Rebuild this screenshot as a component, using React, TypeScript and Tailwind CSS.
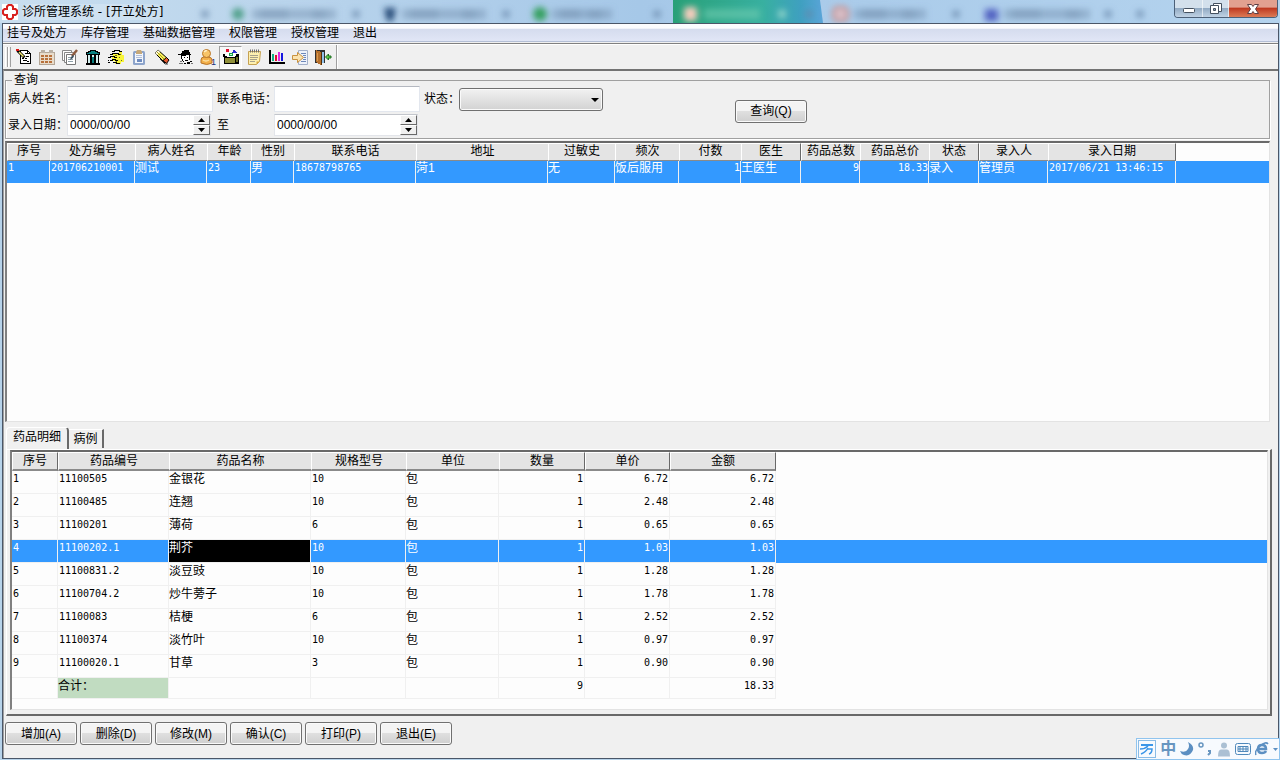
import { clsx } from "clsx";
import type { ReactNode } from "react";

const menus = ["挂号及处方", "库存管理", "基础数据管理", "权限管理", "授权管理", "退出"];

type Column = { title: string; width: number; right?: boolean; mono?: boolean };

const prescriptionColumns: Column[] = [
   { title: "序号", width: 43, mono: true },
   { title: "处方编号", width: 85, mono: true },
   { title: "病人姓名", width: 72 },
   { title: "年龄", width: 44, mono: true },
   { title: "性别", width: 43 },
   { title: "联系电话", width: 122, mono: true },
   { title: "地址", width: 132 },
   { title: "过敏史", width: 67 },
   { title: "频次", width: 64 },
   { title: "付数", width: 62, mono: true, right: true },
   { title: "医生", width: 60 },
   { title: "药品总数", width: 59, mono: true, right: true },
   { title: "药品总价", width: 69, mono: true, right: true },
   { title: "状态", width: 50 },
   { title: "录入人", width: 69 },
   { title: "录入日期", width: 128, mono: true },
];

const prescriptions = [
   ["1", "201706210001", "测试", "23", "男", "18678798765", "菏1", "无", "饭后服用", "1", "王医生", "9", "18.33", "录入", "管理员", "2017/06/21 13:46:15"],
];

const drugColumns: Column[] = [
   { title: "序号", width: 46, mono: true },
   { title: "药品编号", width: 111, mono: true },
   { title: "药品名称", width: 142 },
   { title: "规格型号", width: 95, mono: true },
   { title: "单位", width: 93 },
   { title: "数量", width: 86, mono: true, right: true },
   { title: "单价", width: 85, mono: true, right: true },
   { title: "金额", width: 106, mono: true, right: true },
];

const drugs = [
   ["1", "11100505", "金银花", "10", "包", "1", "6.72", "6.72"],
   ["2", "11100485", "连翘", "10", "包", "1", "2.48", "2.48"],
   ["3", "11100201", "薄荷", "6", "包", "1", "0.65", "0.65"],
   ["4", "11100202.1", "荆芥", "10", "包", "1", "1.03", "1.03"],
   ["5", "11100831.2", "淡豆豉", "10", "包", "1", "1.28", "1.28"],
   ["6", "11100704.2", "炒牛蒡子", "10", "包", "1", "1.78", "1.78"],
   ["7", "11100083", "桔梗", "6", "包", "1", "2.52", "2.52"],
   ["8", "11100374", "淡竹叶", "10", "包", "1", "0.97", "0.97"],
   ["9", "11100020.1", "甘草", "3", "包", "1", "0.90", "0.90"],
];

const actions = ["增加(A)", "删除(D)", "修改(M)", "确认(C)", "打印(P)", "退出(E)"];

const tools: { name: string; art: ReactNode }[] = [
   {
      name: "新建处方",
      art: (
         <>
            <path d="M4.500 1.500h7l3 3v10h-10z" fill="#fff" stroke="#000" />
            <path d="M11.500 1.500v3h3" stroke="#000" />
            <path d="M9 4h2v1H9zM10 7h3v1h-3zM6 9h2v1H6zM9 9h2v1H9zM7 11h4v1H7zM11 12h2v1h-2z" fill="#000" />
            <g shapeRendering="auto">
               <path d="M1.500 1.500l7 7" stroke="#000" strokeWidth="3" />
               <path d="M3 3l4.500 4.500" stroke="#f6ec70" strokeWidth="1.500" />
            </g>
            <path d="M0 0h3v2H0z" fill="#e01818" />
         </>
      ),
   },
   {
      name: "日历",
      art: (
         <>
            <path d="M0.500 3.500h15v12h-15z" fill="#e8dccb" stroke="#b3a595" />
            <path d="M2 1h4v3H2zM10 1h4v3h-4z" fill="#b9b0a4" />
            <path d="M2 6h3v2H2zM6 6h3v2H6zM10 6h3v2h-3zM2 9h3v2H2zM6 9h3v2H6zM10 9h3v2h-3zM2 12h3v2H2zM6 12h3v2H6zM10 12h3v2h-3z" fill="#b8713c" />
         </>
      ),
   },
   {
      name: "编辑",
      art: (
         <g shapeRendering="auto">
            <path d="M0.500 1.500h9v10h-9z" fill="#fff" stroke="#888" />
            <path d="M2.500 3.500h9v10h-9z" fill="#fff" stroke="#888" />
            <path d="M4.500 5.500h9v10h-9z" fill="#fff" stroke="#777" />
            <path d="M6 8.500h3M6 10.500h5M6 12.500h5" stroke="#8fa0a8" />
            <path d="M15 1l-5 6" stroke="#8d5b3f" strokeWidth="2.500" />
            <path d="M11 6l-2 2-1 3 3-2 1-2z" fill="#3d5262" />
         </g>
      ),
   },
   {
      name: "库房",
      art: (
         <>
            <path d="M1.500 5.500v-2h2v-1h2v-1h5v1h2v1h2v2z" fill="#0a8080" stroke="#000" />
            <path d="M2 6h12v8H2z" fill="#d5f0f0" />
            <path d="M2 6h1v8H2zM5 6h2v8H5zM9 6h2v8H9zM13 6h1v8h-1z" fill="#000" />
            <path d="M7 8h2v6H7z" fill="#0a8080" />
            <path d="M1 14h14v2H1z" fill="#000" />
         </>
      ),
   },
   {
      name: "收款",
      art: (
         <>
            <path d="M5 5h6v-2h3v3h2v7h-3v2H7v-3H4z" fill="#f8f53a" />
            <path d="M4 2h2V1h5v1h2v1M2 5h2V4h6v1h2M0 8h2V7h4v1h3M2 11h2v-1h3v1h3M5 13h3v1h4M0 13h2M0 11h1" stroke="#000" />
            <path d="M7 6h2v1H7zM11 8h1v1h-1zM8 12h1v1H8zM12 5h1v1h-1zM13 11h1v1h-1z" fill="#6a6620" />
         </>
      ),
   },
   {
      name: "粘贴",
      art: (
         <g shapeRendering="auto">
            <rect x="2" y="2" width="12" height="14" rx="1.500" fill="#8ea5cb" />
            <path d="M4 4h8v10H4z" fill="#f4f7fc" />
            <path d="M5 3l1-2h4l1 2v2H5z" fill="#c6a878" />
            <path d="M5 6.500h6M5 8.500h6" stroke="#b3bfd6" />
            <path d="M6 10h5v3H6z" fill="#6f8cbf" />
         </g>
      ),
   },
   {
      name: "清除",
      art: (
         <g shapeRendering="auto">
            <path d="M1 4l3-3 10 9-3 4z" fill="#f8ee58" stroke="#000" />
            <path d="M1 4l3-3 2 2-3 3z" fill="#fffbd8" />
            <path d="M3 3l9 9" stroke="#a39a20" />
            <path d="M9 11.500l3.500-3 2.500 2.500-2.500 3.500z" fill="#e2572e" stroke="#000" />
            <path d="M6 10l5 5h3" stroke="#444" />
         </g>
      ),
   },
   {
      name: "医生",
      art: (
         <>
            <path d="M4 4h1V2h2V1h5v2h1v2h1v1H9v1H4V6H1V5h3z" fill="#000" />
            <path d="M5 7h7v4h-1v2H7v-1H6v-2H5z" fill="#fff" />
            <path d="M4 7h1v3H4zM12 6h1v5h-1zM7 8h1v1H7zM10 8h1v1h-1zM5 10h1v2H5zM6 12h1v1H6zM8 11h3v1H8zM10 13h3v2h-3zM7 14h2v1H7zM13 12h2v1h-2z" fill="#000" />
            <path d="M3 12h2v1H3zM2 14h4v1H2zM14 14h2v1h-2z" fill="#777" />
         </>
      ),
   },
   {
      name: "用户",
      art: (
         <g shapeRendering="auto">
            <path d="M1 11q0-3 3-3h4q4 0 4 3v3q-5 3-11 0z" fill="#f3b04a" stroke="#b9762a" />
            <circle cx="6.500" cy="4.500" r="4" fill="#f8c468" stroke="#b9762a" />
            <path d="M4 3q2-2 3-1" stroke="#fff0c8" strokeWidth="1.500" />
            <path d="M3 11q3 2 6 0" stroke="#fde2a4" strokeWidth="1.500" />
            <text x="11" y="16" fontSize="9" fill="#20307a">1</text>
         </g>
      ),
   },
   {
      name: "开立处方",
      art: (
         <>
            <path d="M3 4h9v5H3z" fill="#fff" />
            <path d="M0 5h2v2h2v1h8V7h1V5h3v10H1V8H0z" fill="#000" />
            <path d="M2 9h10v5H2z" fill="#90903a" />
            <path d="M13 8h2v5h-2z" fill="#6a6a22" />
            <path d="M3 0h3v3H3z" fill="#e01030" />
            <path d="M9 4l2-4 3 4z" fill="#2a2ad0" />
            <path d="M6 4h4v3H6z" fill="#16a050" />
            <path d="M7 5h2v1H7z" fill="#c8ffd8" />
         </>
      ),
   },
   {
      name: "记录",
      art: (
         <g shapeRendering="auto">
            <path d="M2.500 2.500h12l-1 10-3 3h-8z" fill="#fdf0b0" stroke="#c6a252" />
            <path d="M4.500 0.500v3M6.500 0.500v3M8.500 0.500v3M10.500 0.500v3M12.500 0.500v3" stroke="#6f6f6f" />
            <path d="M4 6.500h8M4 8.500h8M4 10.500h7M4 12.500h5" stroke="#a7a18a" />
            <path d="M10.500 15.500v-3h3z" fill="#d7a63e" />
         </g>
      ),
   },
   {
      name: "统计",
      art: (
         <>
            <path d="M0 1h2v12h14v2H0z" fill="#000" />
            <path d="M3 5h2v7H3z" fill="#10b080" />
            <path d="M6 6h2v6H6z" fill="#e01030" />
            <path d="M9 3h2v9H9z" fill="#e028e0" />
            <path d="M12 4h2v8h-2z" fill="#1818e0" />
         </>
      ),
   },
   {
      name: "导出",
      art: (
         <g shapeRendering="auto">
            <path d="M6.500 1.500h9v14h-9z" fill="#eef2fa" stroke="#a3b0ca" />
            <path d="M9 4.500h5M11 6.500h3M12 8.500h2M11 10.500h3M9 12.500h5" stroke="#6e88b8" />
            <path d="M0.500 6.500h5v-3l6 5-6 5v-3h-5z" fill="#fbe3ae" stroke="#c9923f" />
         </g>
      ),
   },
   {
      name: "退出",
      art: (
         <>
            <path d="M0 1h10v13H0z" fill="#303030" />
            <path d="M6 3h3v11H6z" fill="#8fc0e8" />
            <path d="M1 1l5 2v13l-5-3z" fill="#b5702c" />
            <path d="M2 4h1v8H2z" fill="#d89a50" />
            <path d="M6 3h1v13H6z" fill="#50300c" />
            <path d="M10.500 8l3-3v2h2.500v2h-2.500v2z" fill="#5fce4a" stroke="#1c6e20" shapeRendering="auto" />
         </>
      ),
   },
];

// Soft shapes of the windows that shine through the glass title bar
function GlassBackdrop() {
   const dots = [205, 356, 506, 657, 809, 956, 1108, 1140];
   const labels = [
      { x: 252, w: 84 },
      { x: 402, w: 84 },
      { x: 552, w: 60 },
      { x: 854, w: 72 },
      { x: 1004, w: 86 },
   ];
   return (
      <svg className="absolute inset-0 h-full w-full" viewBox="0 0 1280 23" preserveAspectRatio="none" aria-hidden="true">
         <defs>
            <filter id="soft" x="-20%" y="-60%" width="140%" height="220%">
               <feGaussianBlur stdDeviation="3" />
            </filter>
            <linearGradient id="active" x1="0" x2="1">
               <stop offset="0" stopColor="#28a077" />
               <stop offset="0.6" stopColor="#38b0a0" />
               <stop offset="0.85" stopColor="#3fa0c0" />
               <stop offset="1" stopColor="#5aa4d8" />
            </linearGradient>
         </defs>
         <path d="M673 0h147l3 23H673z" fill="url(#active)" />
         <g filter="url(#soft)">
            {dots.map(x => (
               <circle key={x} cx={x} cy="14" r="4" fill="#6485a8" opacity="0.7" />
            ))}
            {labels.map(l => (
               <g key={l.x} fill="#6f8cab">
                  <rect x={l.x} y="9" width={l.w} height="10" opacity="0.45" />
                  <rect x={l.x + 8} y="9" width={l.w / 3} height="10" opacity="0.35" />
                  <rect x={l.x + l.w - 24} y="10" width="14" height="9" opacity="0.35" />
               </g>
            ))}
            <circle cx="238" cy="14" r="6" fill="#4d9f88" />
            <path d="M384 8h12l-3 13h-6z" fill="#264c78" />
            <circle cx="540" cy="14" r="7" fill="#35a060" />
            <rect x="684" y="7" width="13" height="14" rx="3" fill="#f4cdbd" />
            <rect x="704" y="9" width="56" height="10" fill="#72cdb0" opacity="0.6" />
            <rect x="778" y="10" width="8" height="8" fill="#8ad2c8" />
            <rect x="834" y="8" width="13" height="12" rx="3" fill="#d8c8d4" stroke="#cc8378" strokeWidth="3" />
            <rect x="985" y="9" width="13" height="12" fill="#5363c2" />
         </g>
      </svg>
   );
}

function TitleBar() {
   const caption = "flex h-full items-center justify-center border-white/60";
   return (
      <header className="relative flex h-[23px] items-start bg-linear-to-r from-[#c9deef] via-[#a6c8e8] to-[#b4d3ee]">
         <GlassBackdrop />
         <div className="relative flex h-full flex-1 items-center gap-1 pl-0.5">
            <svg className="size-4" viewBox="0 0 16 16" aria-hidden="true">
               <path d="M0 0h16v16H0z" fill="#fff" />
               <path d="M5 5V2.500L6.500 1h3L11 2.500V5h2.500L15 6.500v3L13.500 11H11v2.500L9.500 15h-3L5 13.500V11H2.500L1 9.500v-3L2.500 5z" fill="#fff" stroke="#d82020" strokeWidth="2" />
            </svg>
            <h1 className="whitespace-pre rounded-full bg-white/20 font-['DejaVu_Sans','Noto_Sans_CJK_SC',sans-serif] leading-4">诊所管理系统 - [开立处方]</h1>
         </div>
         <div className="relative mr-0.5 flex h-[18px] overflow-hidden rounded-b border border-t-0 border-[#4c6078]">
            <button type="button" aria-label="最小化" className={clsx(caption, "w-7 border-r bg-linear-to-b from-[#d3e0ec] from-45% via-[#93abc4] via-50% to-[#c0d2e4]")}>
               <svg width="14" height="14" viewBox="0 0 14 14">
                  <rect x="1.500" y="6.500" width="11" height="4" rx="1" fill="#fff" stroke="#44505f" />
               </svg>
            </button>
            <button type="button" aria-label="还原" className={clsx(caption, "w-[26px] border-r bg-linear-to-b from-[#d3e0ec] from-45% via-[#93abc4] via-50% to-[#c0d2e4]")}>
               <svg width="14" height="14" viewBox="0 0 14 14">
                  <path d="M4.500 1.500h8v8h-8z" fill="#fff" stroke="#44505f" />
                  <path d="M1.500 3.500h8v8h-8z" fill="#fff" stroke="#44505f" />
                  <path d="M4.500 6.500h2v2h-2z" fill="#8ea5bd" stroke="#44505f" />
               </svg>
            </button>
            <button type="button" aria-label="关闭" className={clsx(caption, "w-12 bg-linear-to-b from-[#e2a090] from-40% via-[#bf3a22] via-50% to-[#dc7a55]")}>
               <svg width="14" height="14" viewBox="0 0 14 14">
                  <path d="M1.500 2.500h4L7 4.500l1.500-2h4L9.500 7l3 4.500h-4L7 9.500l-1.500 2h-4l3-4.500z" fill="#fff" stroke="#5d3f45" />
               </svg>
            </button>
         </div>
      </header>
   );
}

function ToolBar() {
   return (
      <div className="flex h-[25px] items-center border-t border-white bg-[#f0f0f0] pl-0.5">
         <span className="h-5 w-[3px] border-x border-l-white border-r-[#a0a0a0]" />
         <span className="mr-px h-5 w-[3px] border-x border-l-white border-r-[#a0a0a0]" />
         {tools.map(tool => (
            <button
               key={tool.name}
               type="button"
               title={tool.name}
               aria-label={tool.name}
               className={clsx(
                  "flex h-[23px] w-[23px] items-center justify-center",
                  tool.name === "开立处方" && "border border-t-[#a0a0a0] border-r-white border-b-white border-l-[#a0a0a0] bg-[#f8f8f8]"
               )}
            >
               <svg className="size-4 overflow-visible" viewBox="0 0 16 16" fill="none" shapeRendering="crispEdges">
                  {tool.art}
               </svg>
            </button>
         ))}
         <span className="ml-0.5 h-full w-0.5 border-l border-[#a0a0a0] bg-white" />
      </div>
   );
}

function DateField({ id, label }: { id: string; label: string }) {
   const step = "flex h-[10px] w-[17px] items-center justify-center border border-t-white border-r-[#696969] border-b-[#696969] border-l-white bg-[#f0f0f0]";
   return (
      <div className="flex h-[22px] w-36 items-center justify-between border border-[#e3e5ea] border-t-[#c3c6cc] bg-white">
         <input id={id} aria-label={label} defaultValue="0000/00/00" className="w-28 bg-transparent pl-0.5 leading-4 outline-none" />
         <div className="flex flex-col">
            <button type="button" aria-label="增大" className={step}>
               <svg width="7" height="4" viewBox="0 0 7 4"><path d="M0 4l3.500-4L7 4z" /></svg>
            </button>
            <button type="button" aria-label="减小" className={step}>
               <svg width="7" height="4" viewBox="0 0 7 4"><path d="M0 0l3.500 4L7 0z" /></svg>
            </button>
         </div>
      </div>
   );
}

function PushButton({ children }: { children: ReactNode }) {
   return (
      <button type="button" className="h-[23px] w-[72px] rounded-[3px] border border-[#707070] bg-linear-to-b from-[#f4f4f4] from-45% via-[#dfdfdf] via-50% to-[#cfcfcf] leading-4 shadow-[inset_0_0_0_1px_#fafafa]">
         {children}
      </button>
   );
}

function SearchBox() {
   const field = "h-[26px] w-[146px] border border-[#e3e7ee] border-t-[#b4b8c0] bg-white px-1 outline-none";
   return (
      <fieldset className="mr-2 ml-px border border-[#a0a0a0] pb-0.5 pl-0.5 shadow-[inset_1px_0_0_#fff,1px_1px_0_#fff]">
         <legend className="ml-1 px-0.5 leading-[14px]">查询</legend>
         <form className="-mt-px flex items-center gap-[132px]">
            <div className="grid grid-cols-[59px_150px_57px_150px_35px_144px] items-center gap-y-0.5 whitespace-nowrap">
               <label htmlFor="patient">病人姓名：</label>
               <input id="patient" className={field} />
               <label htmlFor="phone">联系电话：</label>
               <input id="phone" className={field} />
               <label htmlFor="state">状态：</label>
               <div className="relative">
                  <select id="state" className="block h-[23px] w-full appearance-none rounded-[3px] border border-[#707070] bg-linear-to-b from-[#f2f2f2] to-[#d2d2d2] shadow-[inset_0_0_0_1px_#fafafa]">
                     <option value=""></option>
                     <option>录入</option>
                  </select>
                  <svg className="pointer-events-none absolute top-[10px] right-1" width="8" height="4" viewBox="0 0 8 4"><path d="M0 0h8L4 4z" /></svg>
               </div>
               <label htmlFor="from">录入日期：</label>
               <DateField id="from" label="录入日期起" />
               <label htmlFor="to">至</label>
               <DateField id="to" label="录入日期止" />
            </div>
            <PushButton>查询(Q)</PushButton>
         </form>
      </fieldset>
   );
}

const headCell = "border-t border-l border-t-white border-l-white border-b-[#8a8a8a] bg-[#e4e4e4] p-0 text-center align-top font-normal leading-[14px]";
const mono = "font-['DejaVu_Sans_Mono','Noto_Sans_CJK_SC',monospace] text-[10px]";

function Columns({ columns }: { columns: Column[] }) {
   return (
      <colgroup>
         {columns.map(c => (
            <col key={c.title} style={{ width: c.width }} />
         ))}
         <col />
      </colgroup>
   );
}

function PrescriptionTable() {
   return (
      <table className="w-full table-fixed border-separate border-spacing-0 whitespace-nowrap">
         <Columns columns={prescriptionColumns} />
         <thead>
            <tr className="h-[18px]">
               {prescriptionColumns.map(c => (
                  <th key={c.title} className={clsx(headCell, "border-b", (c.title === "医生" || c.title === "状态" || c.title === "录入日期") && "border-r border-r-[#696969]")}>
                     {c.title}
                  </th>
               ))}
               <td />
            </tr>
         </thead>
         <tbody>
            {prescriptions.map(row => (
               <tr key={row[1]} className="h-[22px] bg-[#3399ff] text-white">
                  {row.map((cell, i) => (
                     <td
                        key={prescriptionColumns[i].title}
                        className={clsx(
                           "border-r border-[#f0f0f0] align-top leading-[14px]",
                           prescriptionColumns[i].mono && mono,
                           prescriptionColumns[i].right ? "p-0 text-right" : prescriptionColumns[i].mono ? "p-0 pl-px" : "p-0"
                        )}
                     >
                        {cell}
                     </td>
                  ))}
                  <td />
               </tr>
            ))}
         </tbody>
      </table>
   );
}

function DrugTable() {
   return (
      <table className="w-full table-fixed border-separate border-spacing-0 whitespace-nowrap">
         <Columns columns={drugColumns} />
         <thead>
            <tr className="h-[19px]">
               {drugColumns.map(c => (
                  <th key={c.title} className={clsx(headCell, "border-b-2 pt-px", ["序号", "数量", "单价", "金额"].includes(c.title) && "border-r border-r-[#696969]")}>
                     {c.title}
                  </th>
               ))}
               <td />
            </tr>
         </thead>
         <tbody>
            {drugs.map((row, r) => (
               <tr key={row[0]} className={clsx("h-[23px]", r === 3 && "bg-[#3399ff] text-white")}>
                  {row.map((cell, i) => (
                     <td
                        key={drugColumns[i].title}
                        className={clsx(
                           "border-r border-b border-[#f0f0f0] p-0 pt-px align-top leading-[14px]",
                           drugColumns[i].mono && mono,
                           drugColumns[i].right && "pr-px text-right",
                           drugColumns[i].mono && "pl-px",
                           r === 3 && i === 2 && "bg-black"
                        )}
                     >
                        {cell}
                     </td>
                  ))}
                  <td />
               </tr>
            ))}
         </tbody>
         <tfoot>
            <tr className="h-[21px]">
               {drugColumns.map((c, i) => (
                  <td
                     key={c.title}
                     className={clsx(
                        "border-r border-b border-[#f0f0f0] p-0 pt-px align-top leading-[14px]",
                        i === 1 && "bg-[#c1dcc1]",
                        i > 4 && mono,
                        i > 4 && "pr-px text-right"
                     )}
                  >
                     {i === 1 ? "合计：" : i === 5 ? "9" : i === 7 ? "18.33" : ""}
                  </td>
               ))}
               <td />
            </tr>
         </tfoot>
      </table>
   );
}

function InputMethodBar() {
   return (
      <div className="fixed right-0 bottom-0 flex h-[22px] w-36 items-center justify-between border border-[#90c4ee] bg-[#f7fafe] px-px text-[#6795c0]">
         <svg width="18" height="18" viewBox="0 0 18 18" fill="none" stroke="#3b96e8" strokeWidth="2">
            <rect x="0.500" y="0.500" width="17" height="17" stroke="#8abce6" strokeWidth="1" />
            <path d="M3 5h12" />
            <path d="M2 9q5 0 8-3M3 14q5-2 7-6M9 9h5q0 4-3 5" strokeWidth="1.500" />
         </svg>
         <span className="text-base leading-4 font-bold">中</span>
         <svg width="14" height="14" viewBox="0 0 14 14"><path d="M8 0q6 3 5 8-3 7-9 5-3-1-4-4 6 2 8-2 2-3 0-7z" fill="#5c8fc2" /></svg>
         <svg width="14" height="14" viewBox="0 0 14 14" fill="none" stroke="#6795c0">
            <circle cx="3" cy="3" r="2" strokeWidth="1.500" />
            <path d="M10 9h2v2l-2 2" strokeWidth="2" />
         </svg>
         <svg width="14" height="15" viewBox="0 0 14 15" fill="#abc0d4"><circle cx="7" cy="3.500" r="3" /><path d="M1 14.500q0-7 3-7h6q3 0 3 7z" /></svg>
         <svg width="16" height="12" viewBox="0 0 16 12" fill="none" stroke="#4f88ba">
            <rect x="0.500" y="0.500" width="15" height="11" rx="2" />
            <path d="M3 3.500h10v5H3zM3 6h10M5 3v5M8 3v5M11 3v5" />
         </svg>
         <svg width="14" height="14" viewBox="0 0 14 14" fill="none" stroke="#5c8fc2">
            <path d="M3 7h8q0-4-4-4T3 7t4 4q3 0 4-2" strokeWidth="2.500" />
            <path d="M1 13q-2-4 4-9 6-5 8-2" strokeWidth="1.500" />
         </svg>
         <svg width="5" height="3" viewBox="0 0 5 3"><path d="M0 0h5L2.500 3z" fill="#5c8fc2" /></svg>
      </div>
   );
}

export default function App() {
   return (
      <div className="flex min-h-screen flex-col bg-[#b7d3ea] font-['Liberation_Sans','Noto_Sans_CJK_SC',sans-serif] text-xs text-black">
         <TitleBar />
         <div className="mr-px mb-px ml-0.5 flex flex-1 flex-col border border-[#4a5668] bg-[#f0f0f0]">
            <nav className="flex h-[17px] items-center gap-[14px] bg-linear-to-b from-[#fbfcfe] from-25% via-[#d5dcee] via-30% to-[#e1e6f6] pl-1">
               {menus.map(m => (
                  <button key={m} type="button" className="leading-4">{m}</button>
               ))}
            </nav>
            <div className="h-[3px] border-t border-b border-t-[#b4bfd6] border-b-[#808080] bg-[#f0f0f0]" />
            <ToolBar />
            <main className="flex flex-1 flex-col border-t-2 border-l border-t-[#737373] border-l-[#a0a0a0] pt-0.5">
               <SearchBox />
               <section className="mt-0.5 mr-2 ml-px min-h-40 flex-1 border-t-2 border-r border-b border-l-2 border-t-[#696969] border-r-[#e3e3e3] border-b-[#e3e3e3] border-l-[#808080] bg-[#fdfdfd]">
                  <PrescriptionTable />
               </section>
               <div role="tablist" className="mt-[5px] ml-0.5 flex h-[22px] items-end">
                  <button type="button" role="tab" aria-selected="true" className="h-[22px] w-[63px] rounded-t-sm border-t border-r-2 border-l border-t-white border-r-[#696969] border-l-white pb-1 leading-4">药品明细</button>
                  <button type="button" role="tab" aria-selected="false" className="mb-px h-[19px] w-[35px] border-t border-r-2 border-t-white border-r-[#696969] leading-4">病例</button>
               </div>
               <section className="mr-1.5 ml-0.5 border-t border-r-2 border-b-2 border-l border-t-white border-r-[#696969] border-b-[#696969] border-l-white pr-0.5 pb-1 pl-[3px]">
                  <div className="border-t-2 border-r border-b border-l-2 border-t-[#696969] border-r-[#e3e3e3] border-b-[#e3e3e3] border-l-[#808080] bg-[#fdfdfd] pb-2.5">
                     <DrugTable />
                  </div>
               </section>
               <div className="mt-1.5 mb-[13px] flex gap-[3px] pl-px">
                  {actions.map(a => (
                     <PushButton key={a}>{a}</PushButton>
                  ))}
               </div>
            </main>
         </div>
         <InputMethodBar />
      </div>
   );
}
